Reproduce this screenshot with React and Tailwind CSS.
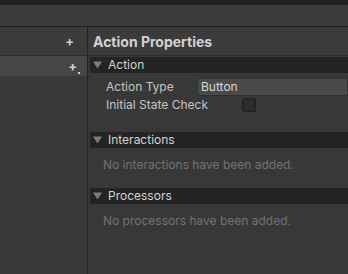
import React from "react";

function Foldout({ title }) {
  return (
    <div className="flex h-[16px] items-center bg-[#242424] pl-[3px]">
      <svg width="9" height="8" viewBox="0 0 9 8" className="mr-[6px]">
        <path d="M0 0.5 H9 L4.5 7.5 Z" fill="#7c7c7c" />
      </svg>
      <span className="text-[12px] leading-none text-[#d2d2d2]">{title}</span>
    </div>
  );
}

function App() {
  return (
    <div
      className="flex h-[274px] w-[348px] flex-col overflow-hidden bg-[#383838]"
      style={{ fontFamily: "Inter, 'Noto Sans', sans-serif" }}
    >
      <div className="h-[5px] bg-[#212121]" />
      <div className="h-[21px] bg-[#3c3c3c]" />
      <div className="h-[1px] bg-[#1c1c1c]" />

      <div className="flex flex-1">
        {/* left panel */}
        <div className="flex w-[88px] flex-col border-r border-[#232323]">
          <div className="flex h-[29px] items-center justify-end border-b border-[#2e2e2e] bg-[#3b3b3b] pr-[13px]">
            <span className="text-[13px] font-bold leading-none text-[#c8c8c8]">+</span>
          </div>
          <div className="flex h-[20px] items-center justify-end bg-[#464646] pr-[10px]">
            <span className="relative text-[13px] font-bold leading-none text-[#d0d0d0]">
              +
              <span className="absolute -right-[3px] bottom-[-1px] h-[2px] w-[2px] bg-[#d0d0d0]" />
            </span>
          </div>
        </div>

        {/* right panel */}
        <div className="flex flex-1 flex-col">
          <div className="flex h-[29px] items-center border-b border-[#2e2e2e] bg-[#3b3b3b] pl-[5px]">
            <span className="text-[14px] font-bold text-[#d2d2d2]">Action Properties</span>
          </div>
          <div className="flex flex-col pl-[2px]">
            <div className="mt-[1px]">
              <Foldout title="Action" />
            </div>
            <div className="mt-[5px] flex h-[18px] items-center">
              <span className="w-[107px] pl-[16px] text-[12px] text-[#c4c4c4]">Action Type</span>
              <div className="flex h-[18px] flex-1 items-center rounded-l-[3px] border border-[#303030] bg-[#4a4a4a] pl-[3px] text-[12px] text-[#d6d6d6]">
                Button
              </div>
            </div>
            <div className="flex h-[18px] items-center">
              <span className="w-[152px] pl-[16px] text-[12px] text-[#c4c4c4]">Initial State Check</span>
              <div className="h-[14px] w-[14px] rounded-[2px] border border-[#1f1f1f] bg-[#2b2b2b]" />
            </div>
            <div className="mt-[18px]">
              <Foldout title="Interactions" />
            </div>
            <div className="mt-[8px] flex h-[18px] items-center pl-[13px] text-[12px] text-[#727272]">
              No interactions have been added.
            </div>
            <div className="mt-[14px]">
              <Foldout title="Processors" />
            </div>
            <div className="mt-[8px] flex h-[18px] items-center pl-[13px] text-[12px] text-[#727272]">
              No processors have been added.
            </div>
          </div>
        </div>
      </div>
    </div>
  );
}

export default App;
